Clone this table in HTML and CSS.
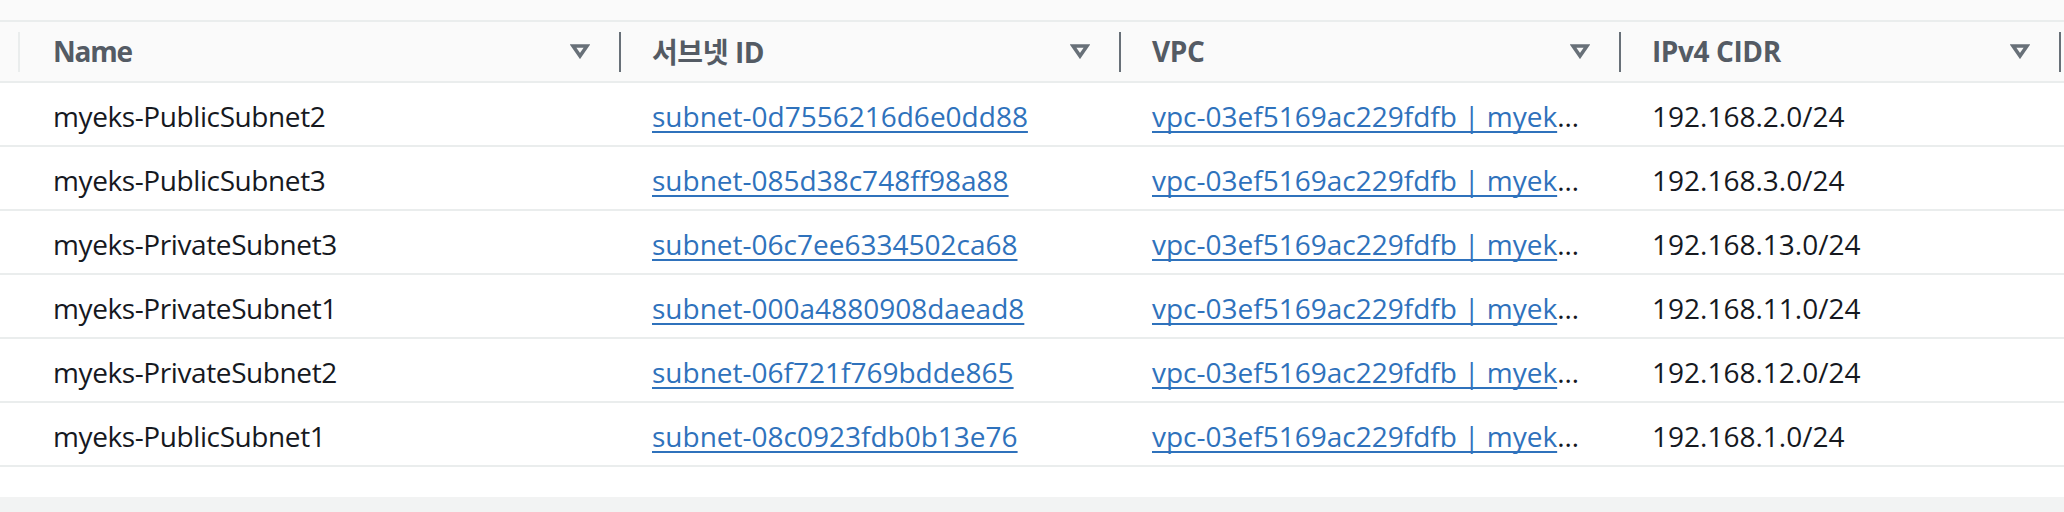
FILE: index.html
```html
<!DOCTYPE html>
<html lang="ko">
<head>
<meta charset="utf-8">
<title>Subnets</title>
<link rel="stylesheet" href="styles.css">
</head>
<body>
<div class="page">
  <div class="top-strip"></div>
  <div class="table">
    <div class="thead">
      <div class="spacer"></div>
      <div class="th">
        <span class="sep sep-light"></span>
        <span class="label first">Name</span>
        <svg class="sort" viewBox="0 0 20 16" width="20" height="16"><polygon points="3,3 17,3 10,13"/></svg>
      </div>
      <div class="th">
        <span class="sep"></span>
        <span class="label">서브넷 ID</span>
        <svg class="sort" viewBox="0 0 20 16" width="20" height="16"><polygon points="3,3 17,3 10,13"/></svg>
      </div>
      <div class="th">
        <span class="sep"></span>
        <span class="label">VPC</span>
        <svg class="sort" viewBox="0 0 20 16" width="20" height="16"><polygon points="3,3 17,3 10,13"/></svg>
      </div>
      <div class="th">
        <span class="sep"></span>
        <span class="label">IPv4 CIDR</span>
        <svg class="sort" viewBox="0 0 20 16" width="20" height="16"><polygon points="3,3 17,3 10,13"/></svg>
      </div>
      <div class="th th-end">
        <span class="sep"></span>
      </div>
    </div>

    <div class="tr">
      <div class="spacer"></div>
      <div class="td first">myeks-PublicSubnet2</div>
      <div class="td"><a class="link" href="#">subnet-0d7556216d6e0dd88</a></div>
      <div class="td clip"><a class="link" href="#">vpc-03ef5169ac229fdfb | myeks-vpc</a></div>
      <div class="td">192.168.2.0/24</div>
      <div class="td"></div>
    </div>
    <div class="tr">
      <div class="spacer"></div>
      <div class="td first">myeks-PublicSubnet3</div>
      <div class="td"><a class="link" href="#">subnet-085d38c748ff98a88</a></div>
      <div class="td clip"><a class="link" href="#">vpc-03ef5169ac229fdfb | myeks-vpc</a></div>
      <div class="td">192.168.3.0/24</div>
      <div class="td"></div>
    </div>
    <div class="tr">
      <div class="spacer"></div>
      <div class="td first">myeks-PrivateSubnet3</div>
      <div class="td"><a class="link" href="#">subnet-06c7ee6334502ca68</a></div>
      <div class="td clip"><a class="link" href="#">vpc-03ef5169ac229fdfb | myeks-vpc</a></div>
      <div class="td">192.168.13.0/24</div>
      <div class="td"></div>
    </div>
    <div class="tr">
      <div class="spacer"></div>
      <div class="td first">myeks-PrivateSubnet1</div>
      <div class="td"><a class="link" href="#">subnet-000a4880908daead8</a></div>
      <div class="td clip"><a class="link" href="#">vpc-03ef5169ac229fdfb | myeks-vpc</a></div>
      <div class="td">192.168.11.0/24</div>
      <div class="td"></div>
    </div>
    <div class="tr">
      <div class="spacer"></div>
      <div class="td first">myeks-PrivateSubnet2</div>
      <div class="td"><a class="link" href="#">subnet-06f721f769bdde865</a></div>
      <div class="td clip"><a class="link" href="#">vpc-03ef5169ac229fdfb | myeks-vpc</a></div>
      <div class="td">192.168.12.0/24</div>
      <div class="td"></div>
    </div>
    <div class="tr">
      <div class="spacer"></div>
      <div class="td first">myeks-PublicSubnet1</div>
      <div class="td"><a class="link" href="#">subnet-08c0923fdb0b13e76</a></div>
      <div class="td clip"><a class="link" href="#">vpc-03ef5169ac229fdfb | myeks-vpc</a></div>
      <div class="td">192.168.1.0/24</div>
      <div class="td"></div>
    </div>
  </div>
  <div class="after"></div>
  <div class="footer-band"></div>
</div>
</body>
</html>
```

FILE: styles.css
```css
* { box-sizing: border-box; }

html, body {
  margin: 0;
  padding: 0;
  background: #ffffff;
}

body {
  font-family: "Open Sans", "Noto Sans CJK KR", sans-serif;
  font-size: 28px;
  color: #16191f;
  width: 2064px;
  height: 512px;
  overflow: hidden;
}

.top-strip {
  height: 22px;
  background: #fafafa;
  border-bottom: 2px solid #eaeded;
}

.thead,
.tr {
  display: grid;
  grid-template-columns: 18px 601px 500px 500px 440px 1fr;
}

.thead {
  height: 61px;
  background: #fafafa;
  border-bottom: 2px solid #eaeded;
}

.th {
  display: flex;
  align-items: center;
  min-width: 0;
}

.sep {
  width: 2px;
  align-self: stretch;
  margin: 10px 0 9px;
  background: #687078;
  flex: none;
}

.sep-light {
  background: #eaeded;
}

.label {
  flex: 1;
  margin-left: 31px;
  margin-top: -2px;
  font-family: "Open Sans", "Noto Sans CJK KR", sans-serif;
  font-weight: 700;
  color: #545b64;
  letter-spacing: -0.4px;
  white-space: nowrap;
}

.label.first {
  margin-left: 33px;
  letter-spacing: -1.2px;
}

.sort {
  flex: none;
  margin-right: 29px;
  margin-top: -2px;
}

.sort polygon {
  fill: none;
  stroke: #687078;
  stroke-width: 3.6;
  stroke-linejoin: miter;
}

.tr {
  height: 64px;
  border-bottom: 2px solid #eaeded;
}

.td {
  display: flex;
  align-items: center;
  padding: 3px 0 0 33px;
  white-space: nowrap;
  min-width: 0;
}

.td.first {
  padding-left: 35px;
  letter-spacing: -0.4px;
}

.td.clip {
  display: block;
  line-height: 62px;
  padding-top: 2px;
  padding-right: 36px;
  overflow: hidden;
  text-overflow: ellipsis;
}

.link {
  color: #2f72bc;
  text-decoration: underline;
  text-decoration-thickness: 2px;
  text-underline-offset: 4px;
  text-decoration-skip-ink: none;
}

.after {
  height: 30px;
}

.footer-band {
  height: 15px;
  background: #f2f3f3;
}
```
